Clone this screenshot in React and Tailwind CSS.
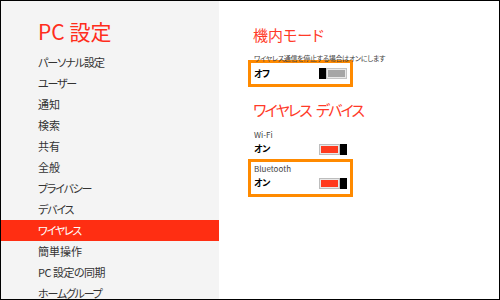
import React from "react";

// tight = kana-heavy label, squeezed to match the narrow system font
const menu = [
    {label: "パーソナル設定", tight: "tracking-[-1px]"},
    {label: "ユーザー", tight: "tracking-[-1.2px]"},
    {label: "通知", tight: ""},
    {label: "検索", tight: ""},
    {label: "共有", tight: ""},
    {label: "全般", tight: ""},
    {label: "プライバシー", tight: "tracking-[-1.2px]"},
    {label: "デバイス", tight: "tracking-[-1.2px]"},
    {label: "ワイヤレス", tight: "tracking-[-1.2px]"},
    {label: "簡単操作", tight: ""},
    {label: "PC 設定の同期", tight: "tracking-[-0.5px]"},
    {label: "ホームグループ", tight: "tracking-[-1.2px]"},
];

const Toggle = ({on}) => {
    if (on) {
        return (
            <div className="flex h-[11px] w-[28px]">
                <div className="flex-1 border border-[#bdbdbd] bg-[#e8e8e8] p-px">
                    <div className="h-full w-full bg-[#ff3a1e]"></div>
                </div>
                <div className="w-[7px] bg-black"></div>
            </div>
        )
    }
    return (
        <div className="flex h-[11px] w-[28px]">
            <div className="w-[7px] bg-black"></div>
            <div className="flex-1 border border-[#c4c4c4] bg-[#e8e8e8] p-px">
                <div className="h-full w-full bg-[#a6a6a6]"></div>
            </div>
        </div>
    )
}

export default function App() {
    return (
        <div className="w-[500px] h-[300px] border border-black flex overflow-hidden bg-white font-['Noto_Sans_CJK_JP',sans-serif] [font-feature-settings:'palt']">
            {/*LEFT MENU*/}
            <div className="w-[218px] shrink-0 bg-[#f4f4f4] pt-[16px]">
                <div className="pl-[37px] text-[21px] leading-[28px] text-[#ff2d1c]">PC 設定</div>
                <div className="mt-[7px]">
                    {menu.map((item) => (
                        <div key={item.label}
                             className={item.label === "ワイヤレス"
                                 ? "h-[21px] pl-[37px] text-[11px] leading-[21px] bg-[#ff2e12] text-white " + item.tight
                                 : "h-[21px] pl-[37px] text-[11px] leading-[21px] text-[#333333] " + item.tight}>
                            {item.label}
                        </div>
                    ))}
                </div>
            </div>

            {/*CONTENT*/}
            <div className="flex-1 pl-[29px] pt-[24px]">
                <div className="pl-[5px] text-[15px] leading-[20px] text-[#ff3a28]">機内モード</div>
                <div className="mt-[9px] pl-[6px] text-[7px] leading-[8px] tracking-[-0.3px] text-[#444444] whitespace-nowrap">
                    ワイヤレス通信を停止する場合はオンにします
                </div>
                <div className="-mt-[2px] w-[105px] h-[27px] border-[3px] border-[#ff8a00] px-[3px] flex items-center justify-between">
                    <span className="text-[9px] font-bold text-black tracking-[-0.5px]">オフ</span>
                    <Toggle on={false}/>
                </div>

                <div className="mt-[13px] pl-[5px] flex gap-[5px] text-[15px] leading-[20px] tracking-[-1.8px] text-[#ff3a28] whitespace-nowrap">
                    <span>ワイヤレス</span>
                    <span>デバイス</span>
                </div>
                <div className="mt-[5px] w-[105px] h-[34px] px-[6px] pt-[5px]">
                    <div className="text-[8px] leading-[10px] text-[#444444]">Wi-Fi</div>
                    <div className="mt-[2px] h-[14px] flex items-center justify-between">
                        <span className="text-[9px] font-bold text-black tracking-[-0.5px]">オン</span>
                        <Toggle on={true}/>
                    </div>
                </div>
                <div className="w-[105px] h-[38px] border-[3px] border-[#ff8a00] px-[3px] pt-[2px]">
                    <div className="text-[8px] leading-[10px] text-[#444444]">Bluetooth</div>
                    <div className="mt-[2px] h-[14px] flex items-center justify-between">
                        <span className="text-[9px] font-bold text-black tracking-[-0.5px]">オン</span>
                        <Toggle on={true}/>
                    </div>
                </div>
            </div>
        </div>
    )
}
